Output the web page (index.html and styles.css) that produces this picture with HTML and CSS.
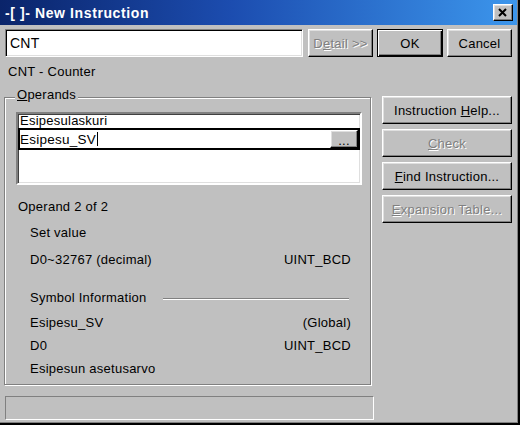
FILE: index.html
```html
<!DOCTYPE html>
<html>
<head>
<meta charset="utf-8">
<link rel="stylesheet" href="styles.css">
</head>
<body>
<div class="window">
  <div class="frame">
    <div class="titlebar">
      <span class="title">-[ ]- New Instruction</span>
      <div class="close">
        <svg width="18" height="15" viewBox="0 0 18 15"><path d="M5 4 L12 11 M12 4 L5 11" stroke="#000" stroke-width="2" fill="none"/></svg>
      </div>
    </div>
    <div class="toprow">
      <div class="field">CNT</div>
      <div class="btn disabled w-detail"><span>D<u>e</u>tail &gt;&gt;</span></div>
      <div class="btn default w-ok"><span>OK</span></div>
      <div class="btn w-cancel"><span>Cancel</span></div>
    </div>
    <div class="desc">CNT - Counter</div>
    <div class="main">
      <div class="group">
        <div class="legend"><u>O</u>perands</div>
        <div class="listbox">
          <div class="row1">Esipesulaskuri</div>
          <div class="editrow">
            <div class="edittext">Esipesu_SV<span class="caret"></span></div>
            <div class="btn dots"><span>...</span></div>
          </div>
        </div>
        <div class="info">
          <div class="line op">Operand 2 of 2</div>
          <div class="line ind set">Set value</div>
          <div class="line ind split range"><span>D0~32767 (decimal)</span><span>UINT_BCD</span></div>
          <div class="line ind sym"><span>Symbol Information</span><span class="etch"></span></div>
          <div class="line ind split name"><span>Esipesu_SV</span><span>(Global)</span></div>
          <div class="line ind split d0"><span>D0</span><span>UINT_BCD</span></div>
          <div class="line ind cm">Esipesun asetusarvo</div>
        </div>
      </div>
      <div class="side">
        <div class="btn"><span>Instruction <u>H</u>elp...</span></div>
        <div class="btn disabled"><span><u>C</u>heck</span></div>
        <div class="btn"><span><u>F</u>ind Instruction...</span></div>
        <div class="btn disabled"><span><u>E</u>xpansion Table...</span></div>
      </div>
    </div>
    <div class="status"></div>
  </div>
</div>
</body>
</html>
```

FILE: styles.css
```css
html, body {
  margin: 0;
  padding: 0;
  background: #000;
}
* { box-sizing: border-box; }
.window {
  width: 520px;
  height: 425px;
  border-right: 2px solid #000;
  border-bottom: 2px solid #000;
  background: #c0c0c0;
  font-family: "Liberation Sans", Arial, sans-serif;
  font-size: 13px;
  letter-spacing: 0.25px;
  color: #000;
}
.frame {
  width: 518px;
  height: 423px;
  border-right: 1px solid #808080;
  border-bottom: 1px solid #808080;
  display: flex;
  flex-direction: column;
}
.titlebar {
  height: 25px;
  flex: none;
  display: flex;
  align-items: center;
  justify-content: space-between;
  padding: 0 4px 0 5px;
  background: linear-gradient(to right, #0a246a 0%, #1c4db0 45%, #3c96ec 100%);
}
.title {
  color: #fff;
  font-weight: bold;
  font-size: 14px;
  letter-spacing: 0.6px;
}
.close {
  width: 20px;
  height: 17px;
  background: #c0c0c0;
  border: 1px solid;
  border-color: #fff #000 #000 #fff;
  box-shadow: inset -1px -1px 0 #808080, inset 1px 1px 0 #dfdfdf;
  display: flex;
  align-items: center;
  justify-content: center;
}
.close svg { display: block; }
.toprow {
  margin-top: 4px;
  padding-left: 5px;
  display: flex;
  height: 28px;
}
.field {
  width: 298px;
  height: 28px;
  background: #fff;
  border: 1px solid;
  border-color: #808080 #fff #fff #808080;
  box-shadow: inset 1px 1px 0 #000, inset -1px -1px 0 #dfdfdf;
  padding-left: 4px;
  display: flex;
  align-items: center;
  font-size: 14px;
}
.btn {
  height: 28px;
  background: #c0c0c0;
  border: 1px solid;
  border-color: #fff #000 #000 #fff;
  box-shadow: inset -1px -1px 0 #808080, inset 1px 1px 0 #dfdfdf;
  display: flex;
  align-items: center;
  justify-content: center;
  white-space: nowrap;
}
.btn.disabled {
  color: #808080;
  text-shadow: 1px 1px 0 #fff;
}
.btn.default {
  border-color: #000;
  box-shadow: inset 1px 1px 0 #fff, inset -1px -1px 0 #000, inset -2px -2px 0 #808080;
}
.w-detail { width: 65px; margin-left: 5px; }
.w-ok { width: 66px; margin-left: 4px; }
.w-cancel { width: 65px; margin-left: 4px; }
.desc {
  margin-top: 7px;
  padding-left: 8px;
  line-height: 16px;
}
.main {
  margin-top: 16px;
  display: flex;
  align-items: flex-start;
}
.group {
  position: relative;
  margin-top: 1px;
  margin-left: 4px;
  width: 367px;
  height: 288px;
  border: 1px solid #808080;
  box-shadow: 1px 1px 0 #fff, inset 1px 1px 0 #fff;
  padding: 14px 0 0 11px;
}
.legend {
  position: absolute;
  left: 10px;
  top: -11px;
  padding: 0 2px;
  line-height: 16px;
  background: #c0c0c0;
}
.listbox {
  width: 346px;
  height: 73px;
  background: #fff;
  border: 2px solid;
  border-color: #808080 #fff #fff #808080;
  box-shadow: inset 1px 1px 0 #404040, inset -1px -1px 0 #dfdfdf;
  padding: 0;
}
.row1 {
  height: 14px;
  line-height: 14px;
  padding-left: 2px;
  margin-top: 0;
}
.editrow {
  height: 22px;
  border: 2px solid #000;
  display: flex;
  align-items: stretch;
}
.edittext {
  flex: 1;
  display: flex;
  align-items: center;
  padding-left: 0;
  font-size: 13.5px;
}
.caret {
  display: inline-block;
  width: 1px;
  height: 14px;
  background: #000;
  margin-left: 1px;
}
.btn.dots {
  width: 28px;
  height: 18px;
  align-items: flex-end;
  padding-bottom: 1px;
  line-height: 10px;
  font-size: 13px;
}
.info {
  width: 335px;
  margin-top: 14px;
}
.line {
  line-height: 16px;
  height: 16px;
  padding-left: 2px;
}
.line.ind { padding-left: 14px; }
.split {
  display: flex;
  justify-content: space-between;
}
.set { margin-top: 10px; }
.range { margin-top: 11px; }
.sym {
  margin-top: 22px;
  display: flex;
  align-items: center;
}
.etch {
  flex: 1;
  height: 2px;
  margin-left: 16px;
  margin-right: 2px;
  margin-top: 2px;
  border-top: 1px solid #808080;
  border-bottom: 1px solid #fff;
}
.name { margin-top: 9px; }
.d0 { margin-top: 7px; }
.cm { margin-top: 7px; }
.side {
  margin-left: 11px;
  width: 130px;
  display: flex;
  flex-direction: column;
  gap: 5px;
}
.status {
  margin-top: 11px;
  margin-left: 5px;
  width: 369px;
  height: 24px;
  border: 1px solid;
  border-color: #808080 #fff #fff #808080;
}
```
